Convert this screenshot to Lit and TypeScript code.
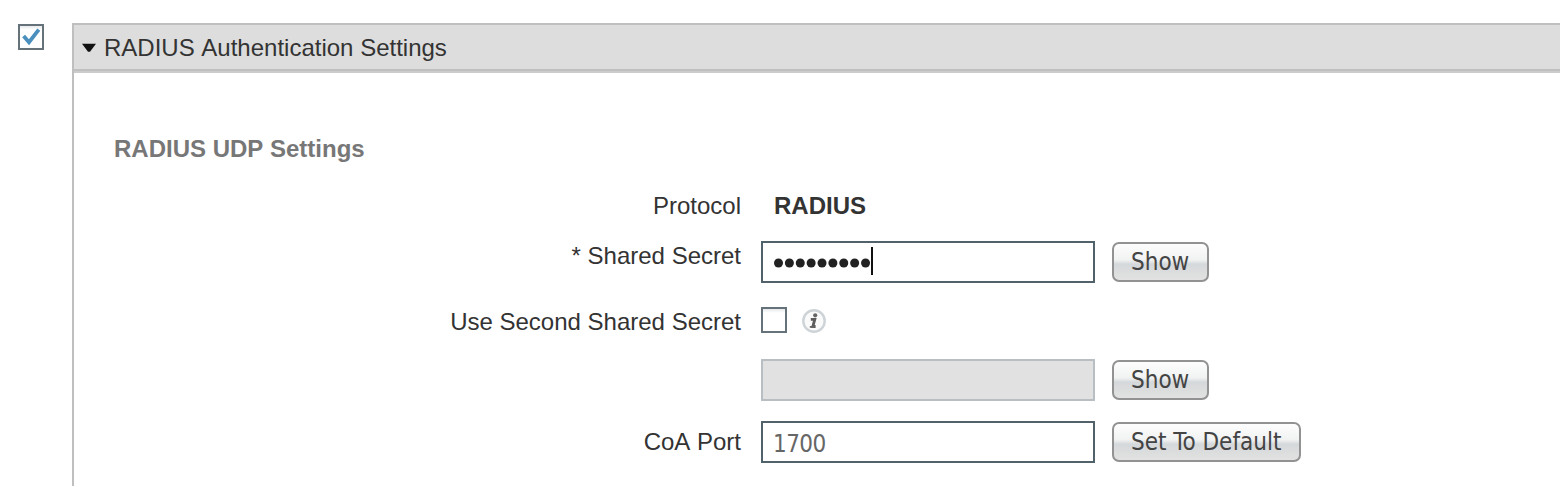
import { LitElement, html, css, svg } from "lit";
import { customElement, property } from "lit/decorators.js";

@customElement("check-box")
class CheckBox extends LitElement {
  @property({ type: Boolean }) checked = false;
  static styles = css`
    :host { display: block; width: 26px; height: 26px; }
    .mark { display: block; }
  `;
  render() {
    return html`<svg class="mark" width="26" height="26" viewBox="0 0 26 26">
      <defs>
        <linearGradient id="g" x1="0" y1="0" x2="0" y2="1">
          <stop offset="0" stop-color="#dfe3e6" />
          <stop offset=".2" stop-color="#fff" />
          <stop offset="1" stop-color="#fff" />
        </linearGradient>
      </defs>
      <rect x="1" y="1" width="24" height="24" fill="url(#g)" stroke="#66727a" stroke-width="2" />
      ${this.checked
        ? svg`<path d="M5.6 12 L11 18.2 L20.8 5.6" fill="none" stroke="#4a8fbd" stroke-width="3.8" />`
        : null}
    </svg>`;
  }
}

@customElement("push-button")
class PushButton extends LitElement {
  @property() label = "";
  static styles = css`
    :host { display: block; }
    .btn {
      display: block;
      box-sizing: border-box;
      height: 40px;
      padding: 0 17px;
      border: 2px solid #929292;
      border-radius: 7px;
      background: linear-gradient(#fdfdfd 0%, #f1f2f2 44%, #d5d8db 56%, #dcdddd 80%, #e2e2e2 100%);
      color: #444;
      font: 24px/35px "DejaVu Sans Condensed", "DejaVu Sans", sans-serif;
      font-stretch: condensed;
      white-space: nowrap;
      text-align: left;
      width: 100%;
    }
  `;
  render() {
    return html`<button class="btn">${this.label}</button>`;
  }
}

@customElement("app-root")
class AppRoot extends LitElement {
  static styles = css`
    :host {
      display: flex;
      width: 100%;
      height: 486px;
      overflow: hidden;
      box-sizing: border-box;
      background: #fff;
      color: #333;
      font: 24px/28px "Liberation Sans", Arial, sans-serif;
      font-kerning: none;
      white-space: nowrap;
    }
    .gutter { flex: none; box-sizing: border-box; width: 72px; padding: 24px 0 0 18px; }
    .panel {
      flex: 1;
      margin-top: 23px;
      border-left: 2px solid #bfbfbf;
      border-top: 2px solid #bfbfbf;
    }
    .head {
      display: flex;
      align-items: center;
      gap: 8px;
      height: 44px;
      padding-left: 8px;
      background: #ddd;
      border-bottom: 2px solid #bfbfbf;
    }
    .arrow { margin-top: 2px; }
    .rule { height: 2px; background: #ccc; }
    .title { padding-top: 1px; }
    .section {
      margin: 62px 0 28px 40px;
      font-weight: bold;
      color: #777;
    }
    .row {
      display: grid;
      grid-template-columns: 667px 334px auto;
      align-items: start;
      justify-content: start;
    }
    .row > :nth-child(2) { margin-left: 20px; margin-right: -20px; }
    .row > :nth-child(3) { margin-left: 37px; }
    .label { text-align: right; }
    .protocol { height: 50px; }
    .protocol .label, .protocol .value, .secret .label, .second .label { padding-top: 1px; }
    .value { font-weight: bold; text-indent: 13px; }
    .secret { height: 66px; }
    .second { height: 52px; }
    .backup { height: 62px; }
    .coa .label { padding-top: 7px; }
    .field {
      display: flex;
      align-items: center;
      box-sizing: border-box;
      height: 42px;
      padding-left: 10px;
      border: 2px solid #52626a;
      background: #fff;
      color: #666;
      font: 24px/28px "DejaVu Sans Condensed", "DejaVu Sans", sans-serif;
      font-stretch: condensed;
      letter-spacing: -0.6px;
    }
    .coa .field { padding-top: 3px; }
    .off { border-color: #b9bec2; background: #e1e1e1; }
    .options { display: flex; gap: 15px; }
    .info { margin-top: 1px; }
    .narrow { width: 97px; margin-top: 1px; }
    .wide { width: 189px; margin-top: 1px; }
  `;

  render() {
    return html`
      <div class="gutter"><check-box checked></check-box></div>
      <main class="panel">
        <div class="head">
          <svg class="arrow" width="14" height="10" viewBox="0 0 14 10"><path d="M0 .8H14L8 8.8H6Z" fill="#111" /></svg>
          <span class="title">RADIUS Authentication Settings</span>
        </div>
        <div class="rule"></div>
        <div class="section">RADIUS UDP Settings</div>
        <div class="row protocol">
          <div class="label">Protocol</div>
          <div class="value">RADIUS</div>
        </div>
        <div class="row secret">
          <div class="label">* Shared Secret</div>
          <div class="field">
            <svg width="101" height="30" viewBox="0 0 101 30">
              ${Array.from({ length: 9 }, (_, i) => svg`<circle cx=${5.5 + i * 10.88} cy="16" r="4.5" fill="#222" />`)}
              <rect x="98" y="0" width="2" height="28" fill="#111" />
            </svg>
          </div>
          <push-button class="narrow" label="Show"></push-button>
        </div>
        <div class="row second">
          <div class="label">Use Second Shared Secret</div>
          <div class="options">
            <check-box></check-box>
            <svg class="info" width="24" height="26" viewBox="0 0 24 26">
              <circle cx="12" cy="13" r="10.7" fill="#fafafa" stroke="#cdd3d6" stroke-width="2.4" />
              <circle cx="13.2" cy="7.3" r="2.1" fill="#666" />
              <path d="M8.8 11.4H12.8L10.8 18.5H13.6" fill="none" stroke="#5c5c5c" stroke-width="2.8" />
              <path d="M7.8 18.9H12" stroke="#666" stroke-width="1.8" />
            </svg>
          </div>
        </div>
        <div class="row backup">
          <div class="label"></div>
          <div class="field off"></div>
          <push-button class="narrow" label="Show"></push-button>
        </div>
        <div class="row coa">
          <div class="label">CoA Port</div>
          <div class="field">1700</div>
          <push-button class="wide" label="Set To Default"></push-button>
        </div>
      </main>
    `;
  }
}
